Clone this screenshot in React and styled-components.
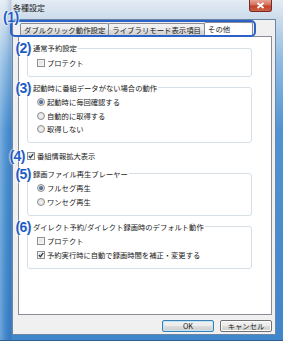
import React from 'react'
import styled, { createGlobalStyle } from 'styled-components'

const GlobalStyle = createGlobalStyle`
  html, body {
    margin: 0;
    padding: 0;
    background: #ffffff;
  }
  body {
    font-family: 'Noto Sans CJK JP', 'Noto Sans', sans-serif;
    color: #1a1a1a;
  }
`

const Window = styled.div`
  position: relative;
  width: 283px;
  height: 341px;
  box-sizing: border-box;
  padding: 0 7px 5px 12px;
  display: flex;
  flex-direction: column;
  border-bottom: 1px solid #2c5d8c;
  background:
    linear-gradient(90deg, rgba(255, 255, 255, 0.25) 0, rgba(255, 255, 255, 0) 6px, rgba(0, 40, 90, 0.15) 11px, rgba(255, 255, 255, 0) 12px),
    linear-gradient(180deg, #e4ecf4 0, #cddcec 18px, #8fbbe3 60px, #4f93d2 130px, #3f86ca 100%);
`

const TitleBar = styled.div`
  height: 19px;
  display: flex;
  align-items: flex-start;
  justify-content: space-between;
`

const Title = styled.span`
  font-size: 8px;
  line-height: 8px;
  margin: 4px 0 0 1px;
  color: #1a1a1a;
`

const CloseButton = styled.div`
  width: 23px;
  height: 12px;
  margin-right: 4px;
  box-sizing: border-box;
  border: 1px solid #7a2a22;
  border-top: none;
  border-radius: 0 0 3px 3px;
  background: linear-gradient(180deg, #e8a394 0, #d2715c 45%, #c0402a 55%, #d0644a 100%);
  display: flex;
  align-items: center;
  justify-content: center;
`

const Client = styled.div`
  flex: 1;
  display: flex;
  flex-direction: column;
  background: #f0f0f0;
  border: 1px solid #6d87a3;
  padding: 2px 3px 2px 5px;
`

const TabStrip = styled.div`
  display: flex;
  align-items: flex-end;
  height: 14px;
  padding-left: 2px;
`

const Tab = styled.div`
  position: relative;
  box-sizing: border-box;
  height: ${p => (p.$active ? '15px' : '13px')};
  margin-bottom: ${p => (p.$active ? '-1px' : '0')};
  margin-right: -1px;
  padding: 0 ${p => (p.$active ? '22px' : '3px')} 0 3px;
  border: 1px solid #898c95;
  border-bottom: none;
  border-radius: 2px 2px 0 0;
  background: ${p => (p.$active ? '#ffffff' : 'linear-gradient(180deg, #f2f2f2 0, #ebebeb 50%, #dddddd 51%, #cfcfcf 100%)')};
  z-index: ${p => (p.$active ? 1 : 0)};
  font-size: 7.4px;
  line-height: 12px;
  white-space: nowrap;
`

const Panel = styled.div`
  flex: 1;
  display: flex;
  flex-direction: column;
  gap: 6px;
  background: #ffffff;
  border: 1px solid #898c95;
  padding: 6px 0 0 8px;
`

const Group = styled.fieldset`
  width: 225px;
  box-sizing: border-box;
  margin: 0;
  padding: 0;
  border: 1px solid #d5dfe5;
  border-radius: 3px;
  min-inline-size: 0;
`

const Legend = styled.legend`
  position: relative;
  margin-left: 4px;
  padding: 0 1px;
  font-size: 7.3px;
  line-height: 10px;
  white-space: nowrap;
`

const GroupBody = styled.div`
  padding: 3px 0 6px 9px;
`

const Row = styled.div`
  position: relative;
  display: flex;
  align-items: center;
  gap: 2px;
  height: 13.5px;
  font-size: 7.3px;
  white-space: nowrap;
`

const Box = styled.span`
  width: 8px;
  height: 8px;
  box-sizing: border-box;
  border: 1px solid #8f8f8f;
  background: linear-gradient(135deg, #dcdcdc 0, #f6f6f6 100%);
  box-shadow: inset 0 0 0 1px #f4f4f4;
  display: flex;
  align-items: center;
  justify-content: center;
`

const Radio = styled.span`
  width: 8px;
  height: 8px;
  box-sizing: border-box;
  border: 1px solid #8f8f8f;
  border-radius: 50%;
  background: radial-gradient(circle at 50% 50%, #f4f4f4 0, #d8d8d8 100%);
  display: flex;
  align-items: center;
  justify-content: center;

  &::after {
    content: '';
    width: 4px;
    height: 4px;
    border-radius: 50%;
    background: ${p => (p.$on ? 'radial-gradient(circle at 40% 40%, #6b8fb4 0, #1d3d63 100%)' : 'transparent')};
  }
`

const Marker = styled.span`
  position: absolute;
  font-family: 'Liberation Sans', Arial, sans-serif;
  font-weight: bold;
  font-size: 14px;
  line-height: 14px;
  letter-spacing: -0.5px;
  color: #1f5cc4;
  text-shadow: 0 0 1px #fff, 0 0 2px #fff, 0 0 2px #fff;
  z-index: 3;
`

const TabsMarker = styled(Marker)`
  left: 3px;
  top: 10px;
`

const LegendMarker = styled(Marker)`
  right: 100%;
  top: -2px;
  margin-right: 1px;
`

const RowMarker = styled(Marker)`
  right: 100%;
  top: 0;
  margin-right: 2px;
`

const TabsOutline = styled.div`
  position: absolute;
  left: 10px;
  top: 20px;
  width: 246px;
  height: 17px;
  box-sizing: border-box;
  border: 2px solid #2a62c9;
  border-radius: 5px;
  z-index: 2;
  pointer-events: none;
`

const ButtonRow = styled.div`
  display: flex;
  justify-content: flex-end;
  gap: 6px;
  padding-top: 5px;
`

const Button = styled.div`
  width: 52px;
  height: 12px;
  box-sizing: border-box;
  border: 1px solid ${p => (p.$default ? '#3c7fb1' : '#707070')};
  border-radius: 2px;
  background: linear-gradient(180deg, #f2f2f2 0, #ebebeb 50%, #dddddd 51%, #cfcfcf 100%);
  box-shadow: inset 0 0 0 1px ${p => (p.$default ? '#bfe3f7' : '#fcfcfc')};
  font-size: 7.3px;
  line-height: 10px;
  text-align: center;
`

const Check = () => (
  <svg width="6" height="6" viewBox="0 0 6 6">
    <path d="M0.8 3 L2.4 4.7 L5.3 0.9" fill="none" stroke="#2b3a4d" strokeWidth="1.2" />
  </svg>
)

const CheckBox = ({ checked }) => <Box>{checked && <Check />}</Box>

export default function App() {
  return (
    <>
      <GlobalStyle />
      <Window>
        <TabsMarker>(1)</TabsMarker>
        <TabsOutline />
        <TitleBar>
          <Title>各種設定</Title>
          <CloseButton>
            <svg width="9" height="7" viewBox="0 0 9 7">
              <path d="M1.5 1 L7.5 6 M7.5 1 L1.5 6" stroke="#ffffff" strokeWidth="1.8" />
            </svg>
          </CloseButton>
        </TitleBar>
        <Client>
          <TabStrip>
            <Tab>ダブルクリック動作設定</Tab>
            <Tab>ライブラリモード表示項目</Tab>
            <Tab $active>その他</Tab>
          </TabStrip>
          <Panel>
            <Group>
              <Legend><LegendMarker>(2)</LegendMarker>通常予約設定</Legend>
              <GroupBody>
                <Row><CheckBox />プロテクト</Row>
              </GroupBody>
            </Group>
            <Group>
              <Legend><LegendMarker>(3)</LegendMarker>起動時に番組データがない場合の動作</Legend>
              <GroupBody>
                <Row><Radio $on />起動時に毎回確認する</Row>
                <Row><Radio />自動的に取得する</Row>
                <Row><Radio />取得しない</Row>
              </GroupBody>
            </Group>
            <Row>
              <RowMarker>(4)</RowMarker>
              <CheckBox checked />番組情報拡大表示
            </Row>
            <Group>
              <Legend><LegendMarker>(5)</LegendMarker>録画ファイル再生プレーヤー</Legend>
              <GroupBody>
                <Row><Radio $on />フルセグ再生</Row>
                <Row><Radio />ワンセグ再生</Row>
              </GroupBody>
            </Group>
            <Group>
              <Legend><LegendMarker>(6)</LegendMarker>ダイレクト予約/ダイレクト録画時のデフォルト動作</Legend>
              <GroupBody>
                <Row><CheckBox />プロテクト</Row>
                <Row><CheckBox checked />予約実行時に自動で録画時間を補正・変更する</Row>
              </GroupBody>
            </Group>
          </Panel>
          <ButtonRow>
            <Button $default>OK</Button>
            <Button>キャンセル</Button>
          </ButtonRow>
        </Client>
      </Window>
    </>
  )
}
